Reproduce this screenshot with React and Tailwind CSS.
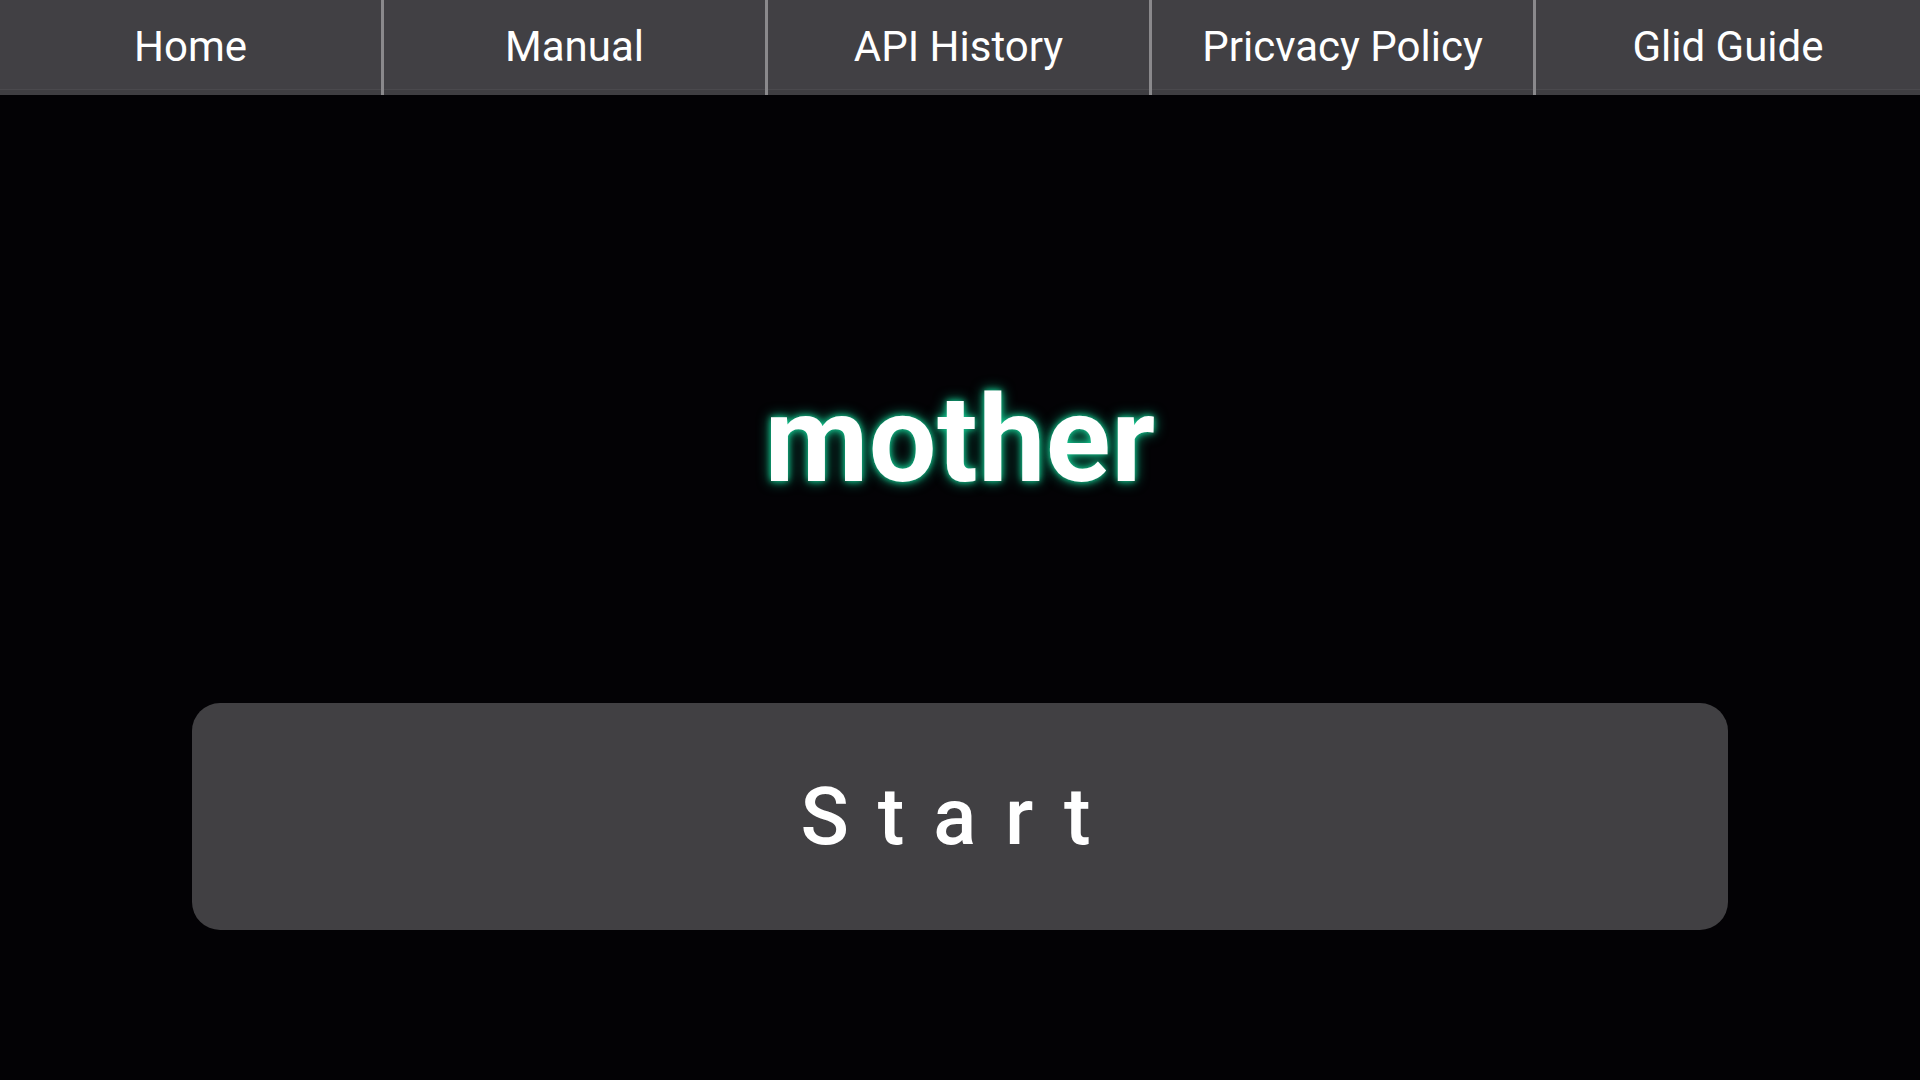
import React from "react";

const items = ["Home", "Manual", "API History", "Pricvacy Policy", "Glid Guide"];

export default function App() {
  return (
    <div className="min-h-screen w-full bg-[#030205] font-['Roboto','Liberation_Sans',sans-serif] text-white">
      <nav className="grid h-[95px] grid-cols-5 bg-[#414044]">
        {items.map((t, i) => (
          <div
            key={t}
            className={
              i < 4
                ? "flex items-center justify-center border-r-[3px] border-[#8a898c] text-[42px] leading-none shadow-[inset_0_-5px_0_#3f3e42,inset_0_-6px_0_#4a494d]"
                : "flex items-center justify-center text-[42px] leading-none shadow-[inset_0_-5px_0_#3f3e42,inset_0_-6px_0_#4a494d]"
            }
          >
            <span className="-mt-[1px]">{t}</span>
          </div>
        ))}
      </nav>
      <main className="flex flex-col items-center pt-[285px]">
        <h1 className="text-[120px] font-bold leading-none tracking-[0.5px] text-white [text-shadow:0_0_6px_#16d196,0_0_14px_#10a87a]">
          mother
        </h1>
        <button className="mt-[203px] flex h-[227px] w-[1536px] items-center justify-center rounded-[28px] bg-[#414043]">
          <span className="text-[80px] font-medium leading-none tracking-[0.36em] text-white">Start</span>
        </button>
      </main>
    </div>
  );
}
